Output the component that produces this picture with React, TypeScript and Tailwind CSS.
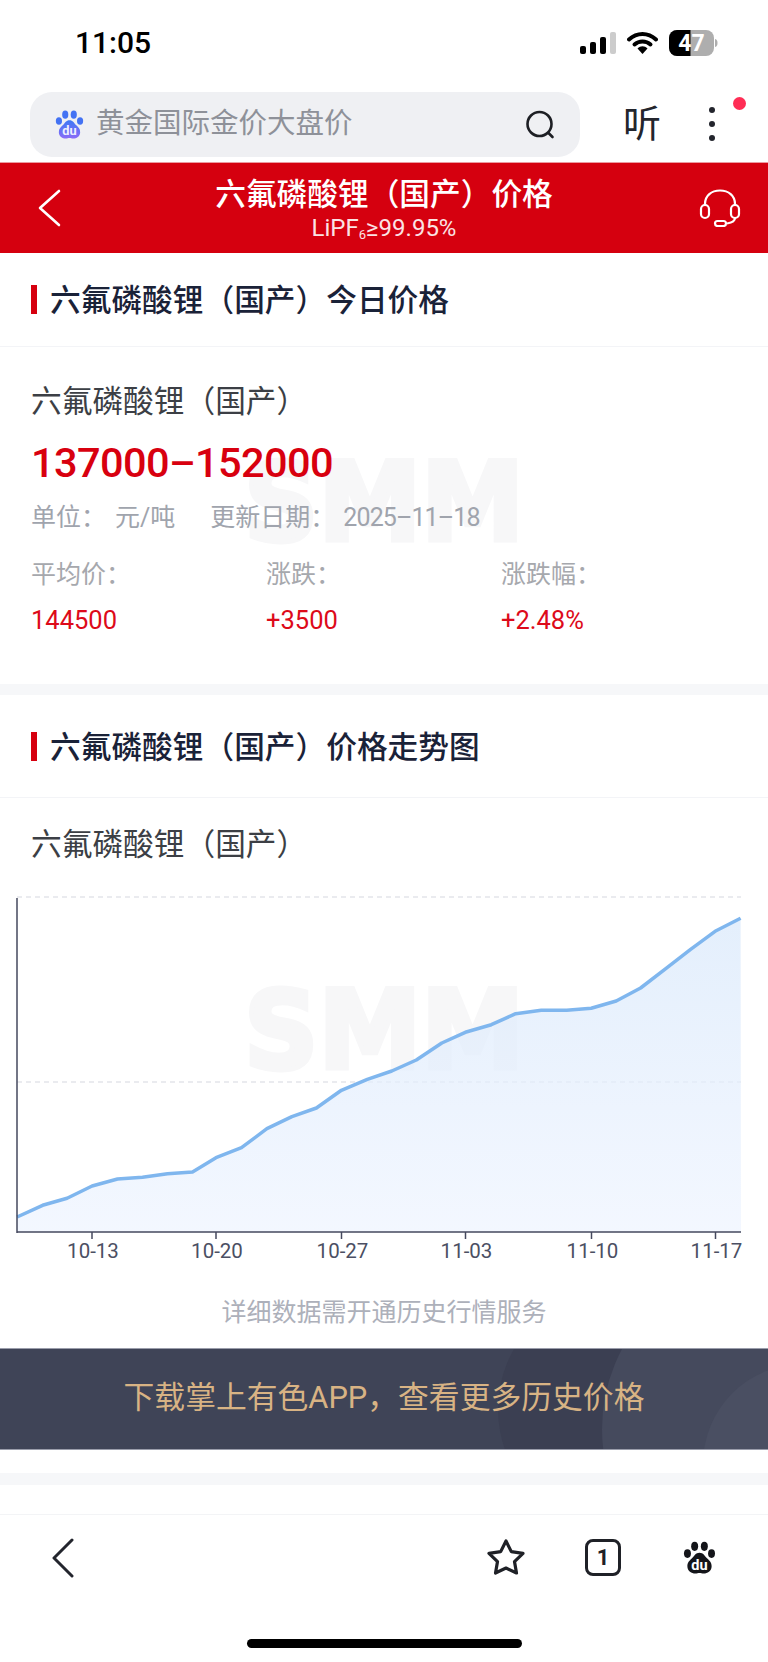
const font = { fontFamily: 'Roboto, "Noto Sans CJK SC", sans-serif' }

// chart points, in px relative to the svg (svg starts at y=890)
const rawX = [35, 87, 137, 188, 240, 291, 342, 393, 441, 493, 545, 596, 646, 697, 750, 800, 850, 902, 950, 1003, 1053, 1105, 1157, 1207, 1258, 1308, 1360, 1410, 1462, 1512]
const rawY = [1068, 1033, 1012, 975, 954, 949, 938, 933, 890, 860, 803, 767, 741, 688, 655, 630, 597, 546, 514, 491, 458, 448, 448, 442, 420, 381, 322, 265, 209, 172]
const pts = rawX.map((x, i) => [+(x / 2.0417).toFixed(1), +(rawY[i] / 3 - 30).toFixed(1)])
const linePath = pts.map((p, i) => `${i ? "L" : "M"}${p[0]} ${p[1]}`).join(" ")
const areaPath = `${linePath} L741 341 L17 341 Z`

const ticks = [
  { x: 92, label: "10-13" },
  { x: 216, label: "10-20" },
  { x: 341.5, label: "10-27" },
  { x: 465.5, label: "11-03" },
  { x: 591.5, label: "11-10" },
  { x: 715.5, label: "11-17" },
]

function Watermark({ top }: { top: string }) {
  return (
    <svg className={`absolute left-[239px] ${top} w-[290px] h-[130px]`} viewBox="0 0 290 130">
      <text
        x="5"
        y="108"
        fontSize="108"
        fontWeight="700"
        fill="#f7f7f8"
        stroke="#f7f7f8"
        strokeWidth="5"
        textLength="280"
        lengthAdjust="spacingAndGlyphs"
        style={{ fontFamily: '"DejaVu Sans", sans-serif' }}
      >
        SMM
      </text>
    </svg>
  )
}

function Paw({ fill, textFill }: { fill: string; textFill: string }) {
  return (
    <svg viewBox="0 0 34 34" className="w-full h-full">
      <ellipse cx="12" cy="5.5" rx="3.6" ry="4.8" fill={fill} />
      <ellipse cx="22" cy="5.5" rx="3.6" ry="4.8" fill={fill} />
      <ellipse cx="4.6" cy="13" rx="3.6" ry="4.4" fill={fill} />
      <ellipse cx="29.4" cy="13" rx="3.6" ry="4.4" fill={fill} />
      <path d="M17 12c4 0 5 3 8 6 2.500 2.500 4.500 4 4.500 8 0 5-4.500 7.500-8 7.500-2 0-3-.6-4.500-.6s-2.500.6-4.500.6c-3.500 0-8-2.500-8-7.500 0-4 2-5.500 4.500-8C12 15 13 12 17 12z" fill={fill} />
      <text x="17" y="29.500" textAnchor="middle" fontSize="15" fontWeight="700" fill={textFill} style={font}>du</text>
    </svg>
  )
}

function SectionHead({ title, className }: { title: string; className: string }) {
  return (
    <div className={`flex items-center pl-[31px] border-b border-[#f3f4f7] ${className}`}>
      <div className="w-[6px] h-[29px] bg-[#d6000f] mr-[13px]" />
      <h2 className="text-[30.700px] leading-none font-medium text-[#1a2238] mt-[4px]">{title}</h2>
    </div>
  )
}

function Stat({ label, value }: { label: string; value: string }) {
  return (
    <div className="w-[235px]">
      <div className="text-[25px] leading-none text-[#a6a8ad]">{label}</div>
      <div className="text-[25.500px] leading-none text-[#dd0a1a] mt-[21px]">{value}</div>
    </div>
  )
}

export default function App() {
  return (
    <div className="relative w-[768px] h-[1662px] overflow-hidden bg-white flex flex-col" style={font}>
      {/* status bar */}
      <div className="h-[92px] shrink-0 flex items-start justify-between pl-[75px] pr-[50px] pt-[25px]">
        <span className="text-[30px] leading-[36px] font-medium text-black">11:05</span>
        <div className="flex items-center gap-[11px] pt-[5px]">
          <svg width="36" height="22" viewBox="0 0 36 22">
            <rect x="0" y="14" width="6" height="8" rx="2" fill="#000" />
            <rect x="10" y="10" width="6" height="12" rx="2" fill="#000" />
            <rect x="20" y="5" width="6" height="17" rx="2" fill="#000" />
            <rect x="30" y="0" width="6" height="22" rx="2" fill="#ccc" />
          </svg>
          <svg width="31" height="24" viewBox="0 0 31 24">
            <path d="M2 8.500C10 1 21 1 29 8.500" fill="none" stroke="#000" strokeWidth="4" strokeLinecap="round" />
            <path d="M7.500 13.500C12 9.500 19 9.500 23.500 13.500" fill="none" stroke="#000" strokeWidth="4" strokeLinecap="round" />
            <path d="M10.500 17.500C13.500 14.500 17.500 14.500 20.500 17.500L15.500 23z" fill="#000" />
          </svg>
          <svg width="49" height="26" viewBox="0 0 49 26">
            <rect x="0" y="0" width="45" height="26" rx="8" fill="#aeaeae" />
            <path d="M8 0h13.500v26H8a8 8 0 0 1-8-8V8a8 8 0 0 1 8-8z" fill="#000" />
            <path d="M46 9c2 .5 2.500 2 2.500 4s-.5 3.500-2.500 4z" fill="#aeaeae" />
            <text x="22.500" y="21" textAnchor="middle" fontSize="23" fontWeight="700" fill="#fff" style={font}>47</text>
          </svg>
        </div>
      </div>

      {/* search row */}
      <div className="relative h-[71px] shrink-0 pl-[30px] border-b border-[#ec9aa0]">
        <div className="w-[550px] h-[65px] rounded-[22px] bg-[#eff0f3] flex items-center pl-[25px] pr-[24px]">
          <div className="w-[29px] h-[29px] shrink-0">
            <svg viewBox="0 0 34 34" className="w-full h-full">
              <defs>
                <linearGradient id="baidu" x1="0" y1="0" x2="0" y2="1">
                  <stop offset="0" stopColor="#3f78f5" />
                  <stop offset="1" stopColor="#8a6cf7" />
                </linearGradient>
              </defs>
              <ellipse cx="12" cy="5.500" rx="3.600" ry="4.800" fill="#4372f3" />
              <ellipse cx="22" cy="5.500" rx="3.600" ry="4.800" fill="#4372f3" />
              <ellipse cx="4.600" cy="13" rx="3.600" ry="4.400" fill="#4372f3" />
              <ellipse cx="29.400" cy="13" rx="3.600" ry="4.400" fill="#4372f3" />
              <path d="M17 12c4 0 5 3 8 6 2.500 2.500 4.500 4 4.500 8 0 5-4.500 7.500-8 7.500-2 0-3-.6-4.500-.6s-2.500.6-4.500.6c-3.500 0-8-2.500-8-7.500 0-4 2-5.500 4.500-8C12 15 13 12 17 12z" fill="url(#baidu)" />
              <text x="17" y="29.500" textAnchor="middle" fontSize="15" fontWeight="700" fill="#eef0ff" style={font}>du</text>
            </svg>
          </div>
          <span className="ml-[12px] text-[28.500px] leading-none text-[#8e9199] flex-1">黄金国际金价大盘价</span>
          <svg width="32" height="32" viewBox="0 0 32 32" fill="none" stroke="#1d1f24" strokeWidth="2.600" strokeLinecap="round">
            <circle cx="15.500" cy="15" r="12" />
            <path d="M24.500 24l4 4" />
          </svg>
        </div>
        <span className="absolute left-[623px] top-[10px] text-[38px] leading-[44px] text-[#23252d]">听</span>
        <div className="absolute left-[709px] top-[15px] flex flex-col gap-[8px]">
          <div className="w-[6px] h-[6px] rounded-full bg-[#23252d]" />
          <div className="w-[6px] h-[6px] rounded-full bg-[#23252d]" />
          <div className="w-[6px] h-[6px] rounded-full bg-[#23252d]" />
        </div>
        <div className="absolute left-[733px] top-[5px] w-[13px] h-[13px] rounded-full bg-[#ff2d55]" />
      </div>

      {/* red header */}
      <div className="relative h-[90px] shrink-0 bg-[#d5000f] text-white flex flex-col items-center pt-[14px]">
        <svg className="absolute left-[38px] top-[26px]" width="23" height="38" viewBox="0 0 23 38" fill="none" stroke="#fff" strokeWidth="2.600" strokeLinecap="round" strokeLinejoin="round">
          <path d="M21 2L2 19l19 17" />
        </svg>
        <div className="text-[30.700px] leading-[36px] font-medium">六氟磷酸锂（国产）价格</div>
        <div className="text-[24px] leading-[24px] mt-[3px] text-[#fbe3e4]">
          LiPF<sub className="text-[13px] leading-none">6</sub>≥99.95%
        </div>
        <svg className="absolute left-[699px] top-[26px]" width="42" height="38" viewBox="0 0 42 38" fill="none" stroke="#fff" strokeWidth="2.200">
          <path d="M6 17V15C6 6.500 12.500 1.500 21 1.500S36 6.500 36 15v2" />
          <rect x="2" y="16" width="8" height="13" rx="4" />
          <rect x="32" y="16" width="8" height="13" rx="4" />
          <path d="M36 29c0 2.500-2.500 4.500-8 5.500" />
          <rect x="16" y="32" width="11" height="5" rx="2.500" />
        </svg>
      </div>

      {/* today price */}
      <SectionHead title="六氟磷酸锂（国产）今日价格" className="h-[94px] shrink-0" />
      <div className="relative h-[348px] shrink-0 pl-[31px] pt-[40px] border-b-[11px] border-[#f6f7f9]">
        <Watermark top="top-[85px]" />
        <div className="relative text-[30.700px] leading-[30px] text-[#3c3f45]">六氟磷酸锂（国产）</div>
        <div className="relative text-[41.500px] leading-none font-medium tracking-[-0.600px] text-[#d8000f] mt-[25px]">137000–152000</div>
        <div className="relative flex text-[25px] leading-none text-[#a0a4ad] mt-[21px]">
          <span>单位：</span>
          <span className="ml-[9px]">元/吨</span>
          <span className="ml-[35px]">更新日期：</span>
          <span className="ml-[8px] tracking-[-0.900px]">2025–11–18</span>
        </div>
        <div className="relative flex mt-[32px]">
          <Stat label="平均价：" value="144500" />
          <Stat label="涨跌：" value="+3500" />
          <Stat label="涨跌幅：" value="+2.48%" />
        </div>
      </div>

      {/* trend */}
      <SectionHead title="六氟磷酸锂（国产）价格走势图" className="h-[103px] shrink-0" />
      <div className="relative flex-1">
        <div className="pl-[31px] pt-[32px] text-[30.700px] leading-[30px] text-[#3c3f45]">六氟磷酸锂（国产）</div>
        <Watermark top="top-[162px]" />
        <svg className="relative block mt-[31px]" width="768" height="372" viewBox="0 0 768 372">
          <defs>
            <linearGradient id="area" x1="0" y1="0" x2="0" y2="1">
              <stop offset="0" stopColor="#d8e8fb" stopOpacity="0.7" />
              <stop offset="1" stopColor="#eef4ff" stopOpacity="0.7" />
            </linearGradient>
          </defs>
          <line x1="17" y1="6" x2="741" y2="6" stroke="#e3e5ea" strokeWidth="1.500" strokeDasharray="5 4" />
          <line x1="17" y1="191" x2="741" y2="191" stroke="#e3e5ea" strokeWidth="1.500" strokeDasharray="5 4" />
          <path d={areaPath} fill="url(#area)" />
          <path d={linePath} fill="none" stroke="#7fb6ee" strokeWidth="3.500" strokeLinejoin="round" />
          <line x1="17" y1="7" x2="17" y2="342" stroke="#44485e" strokeWidth="1.500" />
          <line x1="17" y1="341" x2="741" y2="341" stroke="#44485e" strokeWidth="1.500" />
          {ticks.map((t) => (
            <g key={t.label}>
              <line x1={t.x} y1="341" x2={t.x} y2="348" stroke="#44485e" strokeWidth="1.500" />
              <text x={t.x + 1} y="367" textAnchor="middle" fontSize="20.500" fill="#4b4f63" style={font}>{t.label}</text>
            </g>
          ))}
        </svg>
        <div className="mt-[35px] text-center text-[25px] leading-[30px] text-[#adb0ba]">详细数据需开通历史行情服务</div>

        {/* banner */}
        <div className="relative overflow-hidden mt-[20px] h-[102px] bg-[#3f4457] border-y border-[#9a9dab] flex items-center justify-center">
          <div className="absolute left-[498px] -top-[60px] w-[400px] h-[240px] rounded-full bg-[#3b3f52]" />
          <div className="absolute left-[602px] -top-[90px] w-[340px] h-[340px] rounded-full bg-[#454a5d]" />
          <div className="absolute left-[703px] top-[15px] w-[200px] h-[200px] rounded-full bg-[#4a4f62]" />
          <span className="relative -mt-[1px] text-[30.800px] leading-none text-[#d8b384]">下载掌上有色APP，查看更多历史价格</span>
        </div>
      </div>

      <div className="absolute left-0 top-[1473px] w-full h-[12px] bg-[#f6f7f9]" />

      {/* browser bottom bar */}
      <div className="absolute left-0 top-[1514px] w-full h-[148px] bg-white border-t border-[#f3f4f6]">
        <svg className="absolute left-[51px] top-[23px]" width="24" height="40" viewBox="0 0 24 40" fill="none" stroke="#23252d" strokeWidth="3" strokeLinecap="round" strokeLinejoin="round">
          <path d="M21 2L3 20l18 18" />
        </svg>
        <svg className="absolute left-[486px] top-[23px]" width="40" height="38" viewBox="0 0 40 38" fill="none" stroke="#1f2127" strokeWidth="3.200" strokeLinejoin="round">
          <path d="M20 3l5.300 10.600 11.700 1.800-8.500 8.200 2 11.400L20 30l-10.500 5 2-11.400L3 15.400l11.700-1.800z" />
        </svg>
        <div className="absolute left-[585px] top-[24px] w-[36px] h-[37px] rounded-[8px] border-[3px] border-[#1f2127] flex items-center justify-center text-[22px] leading-none font-bold text-[#1f2127]">1</div>
        <div className="absolute left-[683px] top-[25px] w-[33px] h-[35px]">
          <Paw fill="#14151a" textFill="#ffffff" />
        </div>
        <div className="absolute left-[247px] top-[124px] w-[275px] h-[9px] rounded-full bg-black" />
      </div>
    </div>
  )
}
